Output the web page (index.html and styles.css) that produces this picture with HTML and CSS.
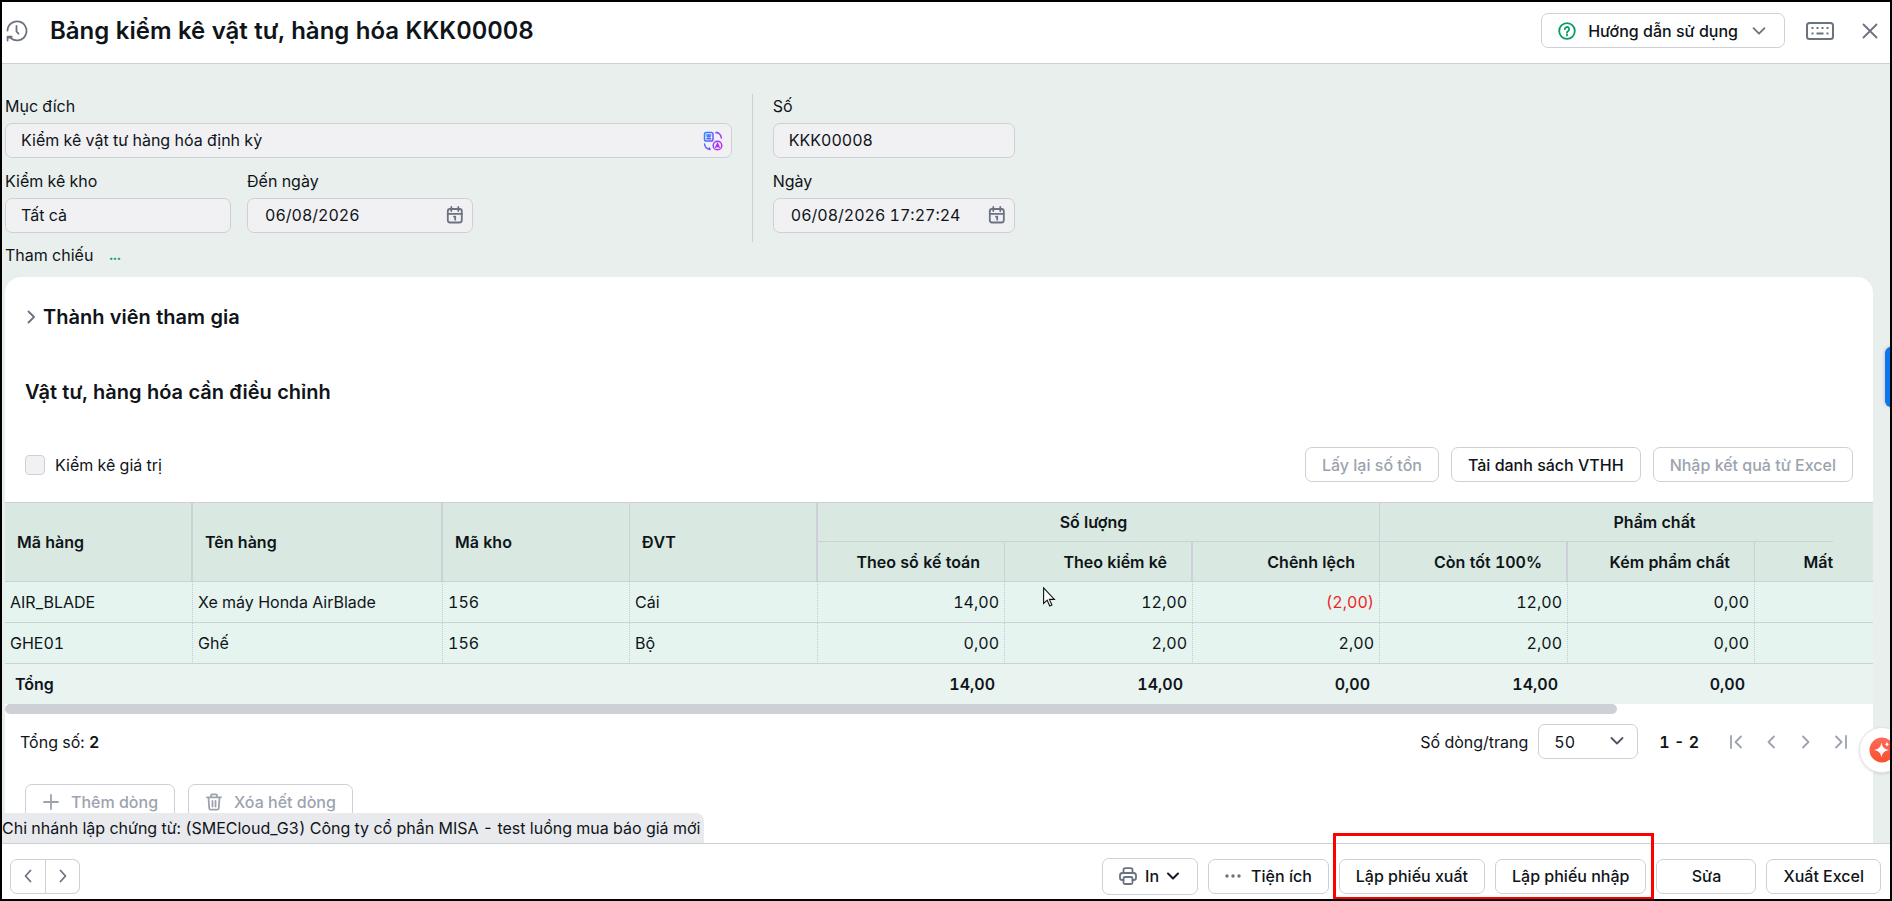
FILE: index.html
```html
<!DOCTYPE html>
<html lang="vi">
<head>
<meta charset="utf-8">
<meta name="viewport" content="width=device-width, initial-scale=1">
<title>Bảng kiểm kê vật tư, hàng hóa KKK00008</title>
<link rel="stylesheet" href="styles.css">
</head>
<body>
<div class="app">
  <header class="header">
    <svg class="icon" width="22" height="22" viewBox="0 0 22 22"><path d="M1.5 10.5A9.5 9.5 0 1 1 5 18.3L1.6 16.6M1.6 20.6v-4h4.2"/><path d="M10.5 6v5.5l2 2.2"/></svg>
    <h1 class="title">Bảng kiểm kê vật tư, hàng hóa KKK00008</h1>
    <button class="btn help" type="button">
      <svg class="icon icon-green" width="18" height="18" viewBox="0 0 18 18"><circle cx="9" cy="9" r="7.8"/><path d="M6.8 7.2a2.2 2.2 0 1 1 3.3 1.9c-.8.4-1.1.8-1.1 1.5M9 12.4v1.2"/></svg>
      <span>Hướng dẫn sử dụng</span>
      <svg class="icon" width="14" height="14" viewBox="0 0 14 14"><path d="M1.5 4.2 7 9.7l5.500-5.500"/></svg>
    </button>
    <button class="plain keyboard" type="button" aria-label="Bàn phím">
      <svg class="icon" width="28" height="18" viewBox="0 0 28 18"><rect x="1" y="1" width="26" height="16" rx="2.500" stroke-width="2"/><path class="dots" d="M5.500 6h2M10.500 6h2M15.500 6h2M20.500 6h2M5.500 11.500h2M10.500 11.500h7M20.500 11.500h2"/></svg>
    </button>
    <button class="plain" type="button" aria-label="Đóng">
      <svg class="icon" width="16" height="16" viewBox="0 0 16 16"><path d="m1.500 1.500 13 13M14.500 1.500l-13 13"/></svg>
    </button>
  </header>

  <main class="main">
    <section class="form">
      <div class="fields">
        <div class="field wide">
          <label for="purpose">Mục đích</label>
          <div class="control">
            <input id="purpose" type="text" value="Kiểm kê vật tư hàng hóa định kỳ" readonly>
            <svg class="control-icon" width="20" height="20" viewBox="0 0 20 20" fill="none" stroke="url(#ai)" stroke-width="1.500" stroke-linecap="round">
              <defs><linearGradient id="ai" gradientUnits="userSpaceOnUse" x1="0" y1="5" x2="20" y2="15"><stop offset="0" stop-color="#1f8bff"/><stop offset=".5" stop-color="#7a4bff"/><stop offset="1" stop-color="#d024f0"/></linearGradient></defs>
              <rect x="1.500" y="1.500" width="8.500" height="8.500" rx="1.800"/><path d="M3.700 4h4M5.700 4v1.500M3.900 7.800h3.800M4.200 5.800h3"/>
              <circle cx="14.500" cy="14.500" r="4.300"/><path d="m12.800 16.300 1.700-3.800 1.700 3.800M13.300 15.400h2.400"/>
              <path d="M13 1.800l2-.4M13 1.600c2.600.2 4.800 2 5.300 5.400M1.500 13c.4 3 2.400 5 5.500 5.400M7 18.400l-.6-1.400"/>
            </svg>
          </div>
        </div>
        <div class="field">
          <label for="stock">Kiểm kê kho</label>
          <div class="control"><input id="stock" type="text" value="Tất cả" readonly></div>
        </div>
        <div class="field">
          <label for="to-date">Đến ngày</label>
          <div class="control date">
            <input id="to-date" type="text" value="06/08/2026" readonly>
            <svg class="control-icon icon" width="18" height="18" viewBox="0 0 18 18"><rect x="1.800" y="3" width="14" height="13.500" rx="2.200"/><path d="M5.300 1v4M12.300 1v4M1.800 7.800h14M8 10.700h1.200v3"/></svg>
          </div>
        </div>
      </div>
      <div class="divider"></div>
      <div class="fields side">
        <div class="field">
          <label for="number">Số</label>
          <div class="control"><input id="number" type="text" value="KKK00008" readonly></div>
        </div>
        <div class="field">
          <label for="date">Ngày</label>
          <div class="control date">
            <input id="date" type="text" value="06/08/2026 17:27:24" readonly>
            <svg class="control-icon icon" width="18" height="18" viewBox="0 0 18 18"><rect x="1.800" y="3" width="14" height="13.500" rx="2.200"/><path d="M5.300 1v4M12.300 1v4M1.800 7.800h14M8 10.700h1.200v3"/></svg>
          </div>
        </div>
      </div>
    </section>
    <div class="reference"><span>Tham chiếu</span><a href="#">...</a></div>

    <section class="panel">
      <h2 class="heading members">
        <svg class="icon" width="8" height="14" viewBox="0 0 8 14"><path d="m1.500 1.500 5.500 5.500-5.500 5.500"/></svg>
        Thành viên tham gia
      </h2>
      <h2 class="heading">Vật tư, hàng hóa cần điều chỉnh</h2>
      <div class="toolbar">
        <label class="check"><input type="checkbox" disabled>Kiểm kê giá trị</label>
        <button class="btn" type="button" disabled>Lấy lại số tồn</button>
        <button class="btn" type="button">Tải danh sách VTHH</button>
        <button class="btn" type="button" disabled>Nhập kết quả từ Excel</button>
      </div>

      <table class="grid">
        <colgroup><col class="c3"><col class="c2"><col class="c1"><col class="c3"><col class="c1"><col class="c3"><col class="c1"><col class="c3"><col class="c1"><col class="c4"><col></colgroup>
        <thead>
          <tr>
            <th class="left thick" rowspan="2">Mã hàng</th>
            <th class="left thick" rowspan="2">Tên hàng</th>
            <th class="left" rowspan="2">Mã kho</th>
            <th class="left thick" rowspan="2">ĐVT</th>
            <th class="group quantity" colspan="3">Số lượng</th>
            <th class="group quality" colspan="3">Phẩm chất</th>
            <th class="action" rowspan="2"></th>
          </tr>
          <tr>
            <th>Theo sổ kế toán</th>
            <th class="thick">Theo kiểm kê</th>
            <th>Chênh lệch</th>
            <th class="thick">Còn tốt 100%</th>
            <th>Kém phẩm chất</th>
            <th class="last">Mất</th>
          </tr>
        </thead>
        <tbody>
          <tr><td class="left">AIR_BLADE</td><td class="left">Xe máy Honda AirBlade</td><td class="left">156</td><td class="left">Cái</td><td>14,00</td><td>12,00</td><td class="negative">(2,00)</td><td>12,00</td><td>0,00</td><td class="last"></td><td class="last"></td></tr>
          <tr><td class="left">GHE01</td><td class="left">Ghế</td><td class="left">156</td><td class="left">Bộ</td><td>0,00</td><td>2,00</td><td>2,00</td><td>2,00</td><td>0,00</td><td class="last"></td><td class="last"></td></tr>
        </tbody>
        <tfoot>
          <tr><td class="left" colspan="4">Tổng</td><td>14,00</td><td>14,00</td><td>0,00</td><td>14,00</td><td>0,00</td><td></td><td></td></tr>
        </tfoot>
      </table>
      <div class="scroll-track"><div class="scroll-thumb"></div></div>

      <div class="pager">
        <span class="total">Tổng số: <b>2</b></span>
        <label for="page-size">Số dòng/trang</label>
        <div class="select">
          <select id="page-size"><option>50</option></select>
          <svg class="icon icon-dark" width="14" height="14" viewBox="0 0 14 14"><path d="M1.500 4 7 9.500 12.500 4"/></svg>
        </div>
        <b class="range">1 - 2</b>
        <div class="pages">
          <button class="plain" type="button" aria-label="Trang đầu"><svg class="icon icon-muted" width="14" height="14" viewBox="0 0 14 14"><path d="M2 1v12M12 1.500 6.500 7l5.500 5.500"/></svg></button>
          <button class="plain" type="button" aria-label="Trang trước"><svg class="icon icon-muted" width="14" height="14" viewBox="0 0 14 14"><path d="M10 1.500 4.500 7l5.500 5.500"/></svg></button>
          <button class="plain" type="button" aria-label="Trang sau"><svg class="icon icon-muted" width="14" height="14" viewBox="0 0 14 14"><path d="M4 1.500 9.500 7 4 12.500"/></svg></button>
          <button class="plain" type="button" aria-label="Trang cuối"><svg class="icon icon-muted" width="14" height="14" viewBox="0 0 14 14"><path d="M12 1v12M2 1.500 7.500 7 2 12.500"/></svg></button>
        </div>
      </div>

      <div class="row-actions">
        <button class="btn" type="button" disabled><svg class="icon" width="16" height="16" viewBox="0 0 16 16"><path d="M8 1v14M1 8h14"/></svg>Thêm dòng</button>
        <button class="btn" type="button" disabled><svg class="icon" width="16" height="18" viewBox="0 0 16 18"><path d="M1 4.300h14M5 4V2.300q0-1 1-1h4q1 0 1 1V4M2.500 4.500l.7 10.700q.1 1.500 1.500 1.500h6.600q1.400 0 1.500-1.500l.7-10.700M6.500 8v5.500M9.500 8v5.500"/></svg>Xóa hết dòng</button>
      </div>
    </section>

    <div class="branch">Chi nhánh lập chứng từ: (SMECloud_G3) Công ty cổ phần MISA - test luồng mua báo giá mới</div>
  </main>

  <footer class="footer">
    <div class="nav">
      <button type="button" aria-label="Chứng từ trước"><svg class="icon" width="8" height="14" viewBox="0 0 8 14"><path d="M6.500 1.500 1.500 7l5 5.500"/></svg></button>
      <button type="button" aria-label="Chứng từ sau"><svg class="icon" width="8" height="14" viewBox="0 0 8 14"><path d="m1.500 1.500 5 5.500-5 5.500"/></svg></button>
    </div>
    <button class="btn print" type="button">
      <svg class="icon" width="18" height="18" viewBox="0 0 18 18"><path d="M4.500 5.500V3q0-1.800 1.800-1.800h5.400q1.800 0 1.800 1.800v2.500M4.500 13H3.300Q1 13 1 10.700V8.500q0-2.500 2.500-2.500h11Q17 6 17 8.500v2.200q0 2.300-2.300 2.300h-1.200"/><rect x="4.500" y="10" width="9" height="7" rx="1.500"/></svg>
      In
      <svg class="icon icon-black" width="12" height="12" viewBox="0 0 12 12"><path d="M1 3.500l5 5 5-5"/></svg>
    </button>
    <button class="btn more" type="button">
      <svg width="16" height="4" viewBox="0 0 16 4" fill="#6b7280"><circle cx="2" cy="2" r="1.700"/><circle cx="8" cy="2" r="1.700"/><circle cx="14" cy="2" r="1.700"/></svg>
      Tiện ích
    </button>
    <div class="highlighted">
      <button class="btn" type="button">Lập phiếu xuất</button>
      <button class="btn" type="button">Lập phiếu nhập</button>
    </div>
    <button class="btn edit" type="button">Sửa</button>
    <button class="btn" type="button">Xuất Excel</button>
  </footer>

  <div class="side-tab"></div>
  <button class="assistant" type="button" aria-label="Trợ lý">
    <svg width="26" height="26" viewBox="0 0 26 26"><defs><linearGradient id="warm" x1="0" y1="0" x2="0" y2="1"><stop offset="0" stop-color="#ff6a5a"/><stop offset="1" stop-color="#f9502c"/></linearGradient></defs><circle cx="13" cy="13" r="12.500" fill="url(#warm)"/><path fill="#fff" d="M12.500 5.500c.8 4.600 2.700 6.500 7.300 7.500-4.600 1-6.500 2.900-7.300 7.500-.8-4.600-2.700-6.500-7.300-7.500 4.600-1 6.500-2.900 7.300-7.500ZM18 4.500c.3 1.800 1 2.500 2.700 2.800-1.700.3-2.400 1-2.700 2.800-.3-1.800-1-2.500-2.700-2.800 1.700-.3 2.400-1 2.700-2.800Z"/></svg>
  </button>
  <svg class="cursor" width="13" height="20" viewBox="0 0 13 20"><path d="M.6.900v15.600l3.600-3.300 2.500 5.700 2.200-1-2.500-5.500h5z" fill="#fff" stroke="#111" stroke-width="1.100"/></svg>
</div>
</body>
</html>
```
FILE: styles.css
```css
* { box-sizing: border-box; }

body {
  margin: 0;
  font: 16px/24px Inter, "Noto Sans", sans-serif;
  font-variant-numeric: tabular-nums;
  color: #0f1419;
}

h1, h2 { margin: 0; }

button, input, select {
  font: inherit;
  font-variant-numeric: inherit;
  color: inherit;
}

button { cursor: pointer; }

.app {
  position: relative;
  display: flex;
  flex-direction: column;
  height: 100vh;
  border: 2px solid #000;
  overflow: hidden;
  background: #e9efed;
}

.icon {
  flex: none;
  fill: none;
  stroke: #6b7280;
  stroke-width: 1.8;
  stroke-linecap: round;
  stroke-linejoin: round;
}
.icon-green { stroke: #0a9d63; }
.icon-dark { stroke: #4b5563; }
.icon-black { stroke: #111827; stroke-width: 2; }
.icon-muted { stroke: #9ca3af; }
.dots { stroke-linecap: butt; stroke-width: 2; }

.btn {
  display: inline-flex;
  align-items: center;
  justify-content: center;
  gap: 8px;
  height: 35px;
  padding: 0 16px;
  border: 1px solid #cdd0d6;
  border-radius: 7px;
  background: #fff;
  font-weight: 500;
  white-space: nowrap;
}
.btn:disabled { color: #9ca3af; }
.btn:disabled .icon { stroke: #9ca3af; }

.plain {
  display: flex;
  padding: 0;
  border: 0;
  background: none;
}

.header {
  display: flex;
  align-items: center;
  height: 62px;
  padding: 0 12px 4px 4px;
  border-bottom: 1px solid #ccd1d3;
  background: #fff;
}
.title {
  flex: 1;
  margin-left: 22px;
  font-size: 24px;
  line-height: 32px;
  font-weight: 600;
}
.help { gap: 12px; padding: 0 18px 0 16px; }
.help .icon:last-child { margin-left: 2px; }
.keyboard { margin: 0 28px 0 21px; }

.main {
  position: relative;
  display: flex;
  flex: 1 1 0;
  flex-direction: column;
  min-height: 0;
  padding: 30px 17px 0 3px;
  overflow: hidden;
}

.form {
  display: grid;
  grid-template-columns: minmax(0, 3fr) 1px minmax(0, 1fr);
  gap: 20px;
  max-width: 1010px;
}
.divider { background: #ccd1d6; }
.fields {
  display: grid;
  grid-template-columns: 226px 226px 1fr;
  gap: 11px 16px;
  padding-bottom: 9px;
}
.side { grid-template-columns: 1fr; }
.wide { grid-column: 1 / -1; }
.field label { display: block; margin-bottom: 5px; }
.control { position: relative; }
.control input {
  display: block;
  width: 100%;
  height: 35px;
  padding: 0 15px 2px;
  border: 1px solid #ccd1d6;
  border-radius: 7px;
  background: #f1f1f4;
  outline: 0;
}
.date input { padding-left: 17px; }
.control-icon { position: absolute; top: 8px; right: 9px; }
.reference {
  display: flex;
  gap: 16px;
  margin: 1px 0 10px;
}
.reference a { color: #0a9d63; font-size: 14px; font-weight: 700; text-decoration: none; }

.panel {
  flex: 1 0 auto;
  padding-top: 28px;
  border-radius: 16px 16px 0 0;
  background: #fff;
}
.heading {
  margin: 0 20px 43px;
  font-size: 20px;
  line-height: 24px;
  font-weight: 600;
}
.members {
  display: flex;
  align-items: center;
  gap: 8px;
  margin: 0 22px 51px;
}

.toolbar {
  display: flex;
  align-items: center;
  gap: 12px;
  margin: 0 20px 20px;
}
.check {
  display: flex;
  align-items: center;
  gap: 10px;
  margin-right: auto;
}
.check input {
  width: 20px;
  height: 20px;
  margin: 0;
  appearance: none;
  border: 1px solid #cdd0d6;
  border-radius: 4px;
  background: #f1f1f4;
}

.grid {
  width: 100%;
  table-layout: fixed;
  border-collapse: separate;
  border-spacing: 0;
}
.c1 { width: 187px; }
.c2 { width: 250px; }
.c3 { width: 188px; }
.c4 { width: 78px; }
.grid th {
  height: 40px;
  padding: 0 24px 0 0;
  border-right: 1px solid #cdd0d6;
  border-bottom: 1px solid #cdd0d6;
  background: #d9e8e0;
  font-weight: 600;
  text-align: right;
}
.grid thead tr:first-child th { border-top: 1px solid #cdd0d6; }
.grid th.left { padding: 0 0 0 12px; text-align: left; }
.grid th.thick { border-right-width: 2px; }
.grid th.group { padding: 0; text-align: center; }
.grid th.quantity { padding-right: 10px; }
.grid th.quality { padding-left: 96px; border-right: 0; }
.grid th.last { padding-right: 0; border-right: 0; }
.grid th.action { border-right: 0; }
.grid td {
  height: 41px;
  padding: 0 5px;
  border-right: 1px dotted #c3cacd;
  border-bottom: 1px solid #cdd0d6;
  background: #e6f4ef;
  text-align: right;
}
.grid td.left { text-align: left; }
.grid td.last { border-right: 0; }
.grid td.negative { color: #f01f28; }
.grid tfoot td {
  height: 40px;
  padding: 0 10px;
  border: 0;
  background: #e9f3f0;
  font-weight: 600;
}

.scroll-track { height: 10px; }
.scroll-thumb {
  width: 86.3%;
  height: 10px;
  border-radius: 5px;
  background: #cdd0d5;
}

.pager {
  display: flex;
  align-items: center;
  margin: 10px 25px 25px 15px;
}
.pager b { font-weight: 600; }
.total { margin-right: auto; }
.select { position: relative; width: 100px; margin: 0 21px 0 10px; }
.select select {
  display: block;
  width: 100%;
  height: 35px;
  padding: 0 15px;
  appearance: none;
  border: 1px solid #cdd0d6;
  border-radius: 7px;
  background: #fff;
}
.select .icon { position: absolute; top: 10px; right: 14px; pointer-events: none; }
.pages { display: flex; gap: 21px; margin-left: 30px; }

.row-actions { display: flex; gap: 13px; margin: 0 20px; }
.row-actions .btn { gap: 12px; padding: 0 16px 0 17px; }

.branch {
  position: absolute;
  left: 0;
  bottom: 0;
  padding: 3px 4px 3px 0;
  border-radius: 0 8px 0 0;
  background: #e9eaee;
}

.footer {
  display: flex;
  align-items: center;
  gap: 10px;
  height: 56px;
  padding: 9px 9px 0 8px;
  border-top: 1px solid #cdd0d6;
  background: #fff;
}
.nav { display: flex; margin-right: auto; }
.nav button {
  display: flex;
  align-items: center;
  justify-content: center;
  width: 36px;
  height: 35px;
  padding: 0;
  border: 1px solid #cdd0d6;
  border-radius: 7px 0 0 7px;
  background: #fff;
}
.nav button + button { width: 34px; border-left: 0; border-radius: 0 7px 7px 0; }
.print { height: 37px; padding: 0 18px 0 16px; }
.more { gap: 10px; padding: 0 16px; }
.edit { min-width: 100px; }

.highlighted { position: relative; display: flex; gap: 10px; }
.highlighted::after {
  content: "";
  position: absolute;
  inset: -26px -8px -6px -6px;
  border: 3px solid #f00;
  pointer-events: none;
}

.side-tab {
  position: absolute;
  top: 345px;
  right: -7px;
  width: 12px;
  height: 60px;
  border-radius: 6px;
  background: #0b76ef;
  box-shadow: 0 0 4px rgba(0, 0, 0, .2);
}
.assistant {
  position: absolute;
  top: 725px;
  right: -15px;
  display: flex;
  align-items: center;
  justify-content: center;
  width: 46px;
  height: 46px;
  padding: 0;
  border: 1px solid #e2e4e6;
  border-radius: 50%;
  background: #fff;
  box-shadow: 0 1px 3px rgba(0, 0, 0, .12);
}
.cursor { position: absolute; left: 1041px; top: 585px; }
```
